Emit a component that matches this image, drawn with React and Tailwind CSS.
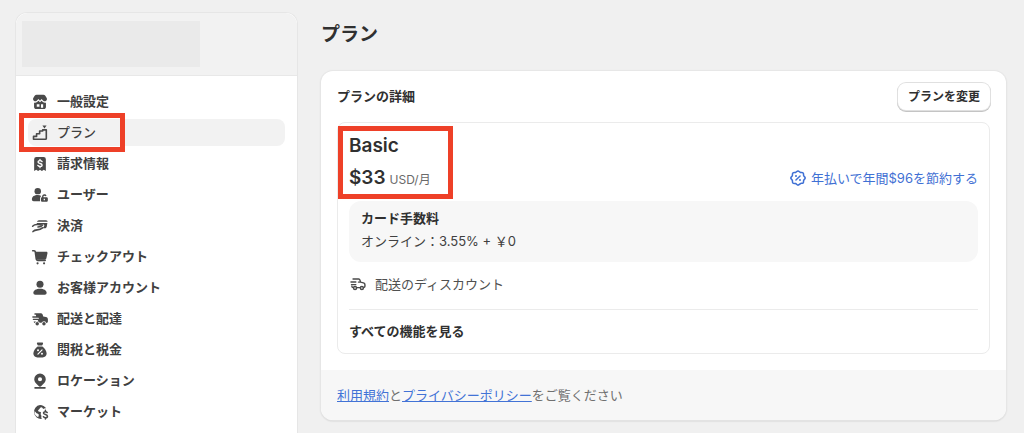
import React from 'react';

function Icon({ children, className = 'text-[#4a4a4a]' }) {
  return (
    <svg viewBox="0 0 20 20" fill="currentColor" aria-hidden="true" className={`size-[18px] shrink-0 ${className}`}>
      {children}
    </svg>
  );
}

const stroke = { fill: 'none', stroke: 'currentColor', strokeWidth: 1.6, strokeLinecap: 'round', strokeLinejoin: 'round' };
const white = { ...stroke, stroke: '#fff', strokeWidth: 1.3 };

const StoreIcon = () => (
  <Icon>
    <path d="M6.200 2h7.600c.9 0 1.600.4 2.100 1.100l1.400 2.300c.4.600.5 1.200.4 1.900a2.400 2.400 0 0 1-4.100 1.200L11.700 6.700 10 8.600 8.300 6.700 6.400 8.500a2.400 2.400 0 0 1-4.100-1.200c-.1-.7 0-1.300.4-1.900l1.400-2.300C4.600 2.400 5.300 2 6.200 2Z" />
    <path fillRule="evenodd" d="M3.400 10.700c1.300.3 2.500 0 3.300-.7l1.600-1.300L10 10.400l1.700-1.700 1.600 1.300c.8.700 2 1 3.300.7v4.800c0 1.300-1 2.300-2.300 2.300H5.700c-1.300 0-2.300-1-2.300-2.300Zm3 1.800v2.700h3v-2.700Zm4.700 0v3.900h2.400v-3.900Z" />
  </Icon>
);

const PlanIcon = () => (
  <Icon>
    <path {...stroke} strokeWidth="1.800" d="M2.800 17v-3.200h3.400v-3H9.600v-3H13V6.500h4v9.500a1 1 0 0 1-1 1Z" />
    <path d="M12.700 1.700h4.600L15 5Z" />
  </Icon>
);

const BillIcon = () => (
  <Icon>
    <path d="M6 2.300h8a2.500 2.500 0 0 1 2.500 2.500v12.900l-2.300-1.300-2.100 1.300-2.100-1.300-2.100 1.300-2.100-1.300-2.300 1.300V4.800A2.500 2.500 0 0 1 6 2.300Z" />
    <path {...white} strokeWidth="1.500" d="M12.300 7.300C11.900 6.600 11.100 6.200 10 6.200c-1.300 0-2.200.6-2.200 1.600 0 2.300 4.500 1 4.500 3.300 0 1-.9 1.700-2.300 1.700-1.200 0-2-.5-2.400-1.200M10 4.900v1.300M10 12.800v1.300" />
  </Icon>
);

const UsersIcon = () => (
  <Icon>
    <circle cx="7.500" cy="5.700" r="3.600" />
    <path d="M1 15c0-3.200 2.800-4.900 6.500-4.900 1.500 0 2.900.4 3.900 1a3 3 0 0 0-1.300 2.500v3.300H3c-1.200 0-2-.8-2-1.900Z" />
    <path fillRule="evenodd" d="M12.300 12.600v-1a2.600 2.600 0 0 1 5-.9l-1.400.7a1.100 1.100 0 0 0-2.100.2v1h3.400c.8 0 1.500.6 1.500 1.400v2.100c0 .8-.7 1.400-1.500 1.400h-4.700c-.8 0-1.400-.6-1.400-1.400V14c0-.8.500-1.400 1.200-1.400Zm1.800 1.600v1.700h1.400v-1.700Z" />
  </Icon>
);

const PaymentIcon = () => (
  <Icon>
    <path d="M8.800 3.500h7.900c1.100 0 1.900.8 1.700 1.900H6.700c.2-1.100 1-1.900 2.100-1.900Z" />
    <path d="M6.500 6.700h11.700l-.7 4c-.2 1-1 1.700-2 1.700h-3.800c1.400-.4 2.600-1.200 3-2.500.3-.9-.3-1.700-1.300-1.800-2.200-.2-4.400-.6-6.900-.4Z" />
    <path {...stroke} strokeWidth="1.700" d="M1.800 10.200c1.700-1.700 3.400-1.900 5.400-1.800l5.700.5c-1.200 1.600-3 2.100-5.200 2.200M2.200 16.200c1.400-1.500 2.800-1.800 4.600-1.900 2.600-.1 4.300-.6 5.900-2.200" />
  </Icon>
);

const CartIcon = () => (
  <Icon>
    <path {...stroke} strokeWidth="1.800" d="M1.900 3h1.500c.8 0 1.300.4 1.400 1.200l1.100 8.300c.1.700.6 1.200 1.400 1.200h8.500" />
    <path d="M5 4.200h12c.9 0 1.500.8 1.300 1.600l-1.200 5.700c-.2.900-.9 1.500-1.800 1.500H6Z" />
    <circle cx="7.300" cy="17" r="1.200" /><circle cx="14.500" cy="17" r="1.200" />
  </Icon>
);

const PersonIcon = () => (
  <Icon>
    <circle cx="10" cy="5.900" r="3.900" />
    <path d="M2.600 15.400c0-2.700 3.300-4.500 7.400-4.500s7.400 1.800 7.400 4.500c0 1.300-.9 2.200-2.200 2.200H4.800c-1.300 0-2.200-.9-2.200-2.200Z" />
  </Icon>
);

const TruckIcon = () => (
  <Icon>
    <path d="M4.500 3.600h6.200c1.100 0 2 .6 2.300 1.600l.6 2 3 .7c1.300.3 2.200 1.300 2.200 2.600v2.100c0 1-.6 1.800-1.600 2a2.900 2.900 0 0 0-5.500-.3H9.700a2.900 2.900 0 0 0-5.500.2c-.8-.3-1.200-1-1.200-1.800h4.200a.7.700 0 0 0 0-1.500H2.500a.8.800 0 0 1 0-1.500h5.700a.6.600 0 0 0 0-1.200H2.100a.8.800 0 0 1 0-1.600h3.500V5.400H4.500a.9.900 0 0 1 0-1.800Z" />
    <circle cx="6.900" cy="15.200" r="1.900" /><circle cx="14.400" cy="15.200" r="1.900" />
  </Icon>
);

const TaxIcon = () => (
  <Icon>
    <path d="M7.600 1.700h4.800c.8 0 1.300.8.9 1.500l-1 1.800H7.700l-1-1.800c-.4-.7.100-1.500.9-1.500ZM7.300 6.100h5.400c2.600 2.200 4.700 5.100 4.700 7.900 0 2.700-1.900 4.200-4.500 4.200H7.100c-2.600 0-4.500-1.500-4.500-4.200 0-2.800 2.100-5.700 4.700-7.900Z" />
    <path {...white} d="m12.300 9.800-4.600 4.800" />
    <circle cx="7.800" cy="10.300" r="1.100" fill="#fff" /><circle cx="12.200" cy="14.200" r="1.100" fill="#fff" />
  </Icon>
);

const PinIcon = () => (
  <Icon>
    <path fillRule="evenodd" d="M10 1.700a6.400 6.400 0 0 1 6.400 6.400c0 3.500-2.800 5.200-4.900 7.500-.8.900-2.200.9-3 0-2.100-2.300-4.900-4-4.900-7.500A6.400 6.400 0 0 1 10 1.700Zm0 4a2.300 2.300 0 1 0 0 4.600 2.300 2.300 0 0 0 0-4.600Z" />
    <path {...stroke} strokeWidth="1.800" d="M4.500 17.700h11" />
  </Icon>
);

const MarketIcon = () => (
  <Icon>
    <path fillRule="evenodd" d="M10 2.200c2.900 0 5.400 1.400 6.800 3.700-1.300-.3-2.500 0-3.300.9-.5-.9-.7-1.900-2-2-1.500 0-1.300 1.400-2.400 2.100-.9.600-1.700 1.400-.9 2.300.8.900 2.300.4 3 1.400-.8 1.500-.3 3 .6 3.900-.7.800-.5 2.100.3 3.100A7.700 7.700 0 1 1 10 2.200ZM3.800 9.500c-.2 3 1.500 5.300 4.300 6.200.2-1.400 1-2 .3-3.100-.8-1-2.200-.6-2.800-1.700-.3-.7-.8-1.400-1.800-1.400Z" />
    <path {...stroke} strokeWidth="1.700" d="M18 10.600c-.4-.7-1.100-1-2-1-1.200 0-2.100.6-2.100 1.600 0 2.200 4.400 1.200 4.400 3.400 0 1.100-.9 1.700-2.200 1.700-1.100 0-1.900-.4-2.300-1.100M16 8.200v1.300M16 16.400v1.300" />
  </Icon>
);

const DiscountIcon = () => (
  <Icon className="text-[#3f70d4]">
    <path {...stroke} strokeWidth="1.700" d="M10 2.100c1.200 0 1.700 1.300 2.700 1.700s2.200-.2 3 .6.200 2 .6 3 1.700 1.400 1.700 2.600-1.300 1.600-1.700 2.600.2 2.200-.6 3-2-.2-3 .6-1.500 1.700-2.700 1.700-1.700-1.300-2.700-1.700-2.200.2-3-.6-.2-2-.6-3S2 11.200 2 10s1.300-1.600 1.700-2.600-.2-2.200.6-3 2-.2 3-.6S8.800 2.100 10 2.100Z" />
    <path {...stroke} d="m12.300 7.700-4.600 4.600" />
    <circle cx="7.800" cy="7.900" r="1.100" /><circle cx="12.200" cy="12.100" r="1.100" />
  </Icon>
);

const DeliveryIcon = () => (
  <Icon>
    <path {...stroke} d="M4.500 4.500h6.200c.7 0 1.300.5 1.500 1.200l.6 2.200 3.300.8c.9.200 1.600 1 1.600 2v1.900c0 .8-.5 1.300-1.300 1.400M12.400 14H8.600M12.800 7.900h-2.300M2.200 7.700h5.400M2.800 10.700h4.700M4.800 14c-1 0-1.600-.6-1.600-1.500" />
    <circle {...stroke} cx="6.700" cy="14.400" r="1.700" /><circle {...stroke} cx="14.300" cy="14.400" r="1.700" />
  </Icon>
);

const items = [
  ['一般設定', StoreIcon],
  ['プラン', PlanIcon],
  ['請求情報', BillIcon],
  ['ユーザー', UsersIcon],
  ['決済', PaymentIcon],
  ['チェックアウト', CartIcon],
  ['お客様アカウント', PersonIcon],
  ['配送と配達', TruckIcon],
  ['関税と税金', TaxIcon],
  ['ロケーション', PinIcon],
  ['マーケット', MarketIcon],
];

function Sidebar() {
  return (
    <aside className="w-[283px] shrink-0 rounded-t-xl border border-b-0 border-[#e6e6e6] bg-white">
      <div className="rounded-t-xl border-b border-[#e8e8e8] bg-[#f2f2f2] px-1.5 pt-2 pb-2">
        <div className="h-[46px] w-[178px] bg-[#eaeaea]" />
      </div>
      <nav className="px-3 pt-3">
        <ul className="flex flex-col gap-1">
          {items.map(([label, ItemIcon]) => {
            const active = label === 'プラン';
            return (
              <li key={label} className="relative">
                <a
                  href="#"
                  aria-current={active ? 'page' : undefined}
                  className={`flex h-[27px] items-center gap-2 rounded-lg pl-[3px] text-[#404040] ${active ? 'bg-[#f2f2f2] font-medium' : 'font-bold'}`}
                >
                  <ItemIcon />
                  {label}
                </a>
                {active && <span className="pointer-events-none absolute -inset-y-1.5 -left-[9px] w-[106px] border-5 border-[#ee4028]" />}
              </li>
            );
          })}
        </ul>
      </nav>
    </aside>
  );
}

function PlanSummary() {
  return (
    <div className="mt-3 rounded-lg border border-[#ebebeb] px-[11px] pt-[9px] pb-3">
      <div className="flex items-end justify-between">
        <div className="relative">
          <h3 className="text-[19px] leading-7 font-semibold">Basic</h3>
          <p className="mt-1 flex items-baseline gap-1 leading-7">
            <span className="text-[19px] font-semibold">$33</span>
            <span className="text-xs text-[#6a6a6a]">USD/月</span>
          </p>
          <span className="pointer-events-none absolute -top-1.5 -bottom-[7px] -left-[11px] w-[115px] border-5 border-[#ee4028]" />
        </div>
        <a href="#" className="flex items-center gap-1 pb-0.5 leading-6 text-[#3f70d4]">
          <DiscountIcon />
          年払いで年間$96を節約する
        </a>
      </div>
      <div className="mt-[9px] rounded-xl bg-[#f7f7f7] px-3 pt-[7px] pb-[11px]">
        <h4 className="leading-5 font-bold">カード手数料</h4>
        <p className="mt-[3px] leading-5 text-[#404040]">オンライン：3.55% + ￥0</p>
      </div>
      <p className="mt-3 flex items-center gap-2 leading-5 text-[#505050]">
        <DeliveryIcon />
        配送のディスカウント
      </p>
      <hr className="mt-[15px] mb-[11px] border-[#ebebeb]" />
      <button type="button" className="block leading-5 font-bold">すべての機能を見る</button>
    </div>
  );
}

export default function App() {
  return (
    <div className="flex min-h-screen gap-[23px] bg-[#f0f0f0] pt-3 pr-[18px] pl-[15px] font-[Inter,'Noto_Sans_CJK_JP',sans-serif] text-[13px] text-[#303030]">
      <Sidebar />
      <main className="min-w-0 flex-1 pb-3">
        <h1 className="pt-2 text-[19px] leading-[30px] font-bold">プラン</h1>
        <section className="mt-[21px] rounded-xl bg-white shadow-[0_0_1px_1px_#e6e6e6,0_1px_2px_#00000033]">
          <div className="px-4 pt-3 pb-4">
            <div className="flex items-center justify-between">
              <h2 className="font-bold">プランの詳細</h2>
              <button type="button" className="h-[27px] rounded-lg bg-white px-[10px] text-xs font-bold shadow-[0_0_0_1px_#e0e0e0,0_1px_0_1px_#c4c4c4]">プランを変更</button>
            </div>
            <PlanSummary />
          </div>
          <footer className="rounded-b-xl bg-[#f7f7f7] px-4 py-[15px] leading-5 text-[#707070]">
            <a href="#" className="text-[#4273d6] underline">利用規約</a>と
            <a href="#" className="text-[#4273d6] underline">プライバシーポリシー</a>をご覧ください
          </footer>
        </section>
      </main>
    </div>
  );
}
